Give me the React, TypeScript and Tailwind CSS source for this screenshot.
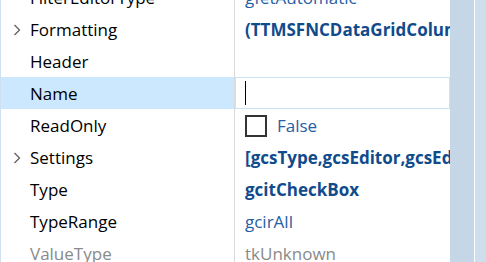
import React from "react";

type Row = {
  name: string;
  value?: string;
  expand?: boolean;
  bold?: boolean;
  dim?: boolean;
  selected?: boolean;
  checkbox?: boolean;
};

const rows: Row[] = [
  { name: "FilterEditorType", value: "gfetAutomatic", dim: false },
  { name: "Formatting", value: "(TTMSFNCDataGridColumnFormatting)", expand: true, bold: true },
  { name: "Header", value: "" },
  { name: "Name", selected: true },
  { name: "ReadOnly", value: "False", checkbox: true },
  { name: "Settings", value: "[gcsType,gcsEditor,gcsEditorItems]", expand: true, bold: true },
  { name: "Type", value: "gcitCheckBox", bold: true },
  { name: "TypeRange", value: "gcirAll" },
  { name: "ValueType", value: "tkUnknown", dim: true },
];

function Chevron() {
  return (
    <svg width="8" height="12" viewBox="0 0 8 12" className="shrink-0">
      <path d="M1.5 1 L6.5 6 L1.5 11" fill="none" stroke="#5f5f5f" strokeWidth="1.3" />
    </svg>
  );
}

export default function App() {
  return (
    <div
      className="w-[486px] h-[262px] overflow-hidden flex bg-white text-[17px]"
      style={{ fontFamily: '"Open Sans", "Noto Sans", sans-serif' }}
    >
      <div className="w-[450px] h-full flex border-l border-[#cfe0f0] overflow-hidden">
        <div className="flex flex-col mt-[-19px] w-full">
          {rows.map((r) => (
            <div key={r.name} className="flex h-[32px] shrink-0">
              <div
                className={
                  "w-[233px] shrink-0 flex items-center pt-[1px] " +
                  (r.selected ? "bg-[#cce8ff]" : "")
                }
              >
                <div className="w-[29px] pl-[12px] flex items-center">
                  {r.expand ? <Chevron /> : null}
                </div>
                <span className={r.dim ? "text-[#8a8a8a]" : "text-[#000000]"}>{r.name}</span>
              </div>
              <div className="w-px bg-[#dadada] shrink-0" />
              {r.selected ? (
                <div className="flex-1 border border-[#c9e2f6] flex items-center pl-[9px] min-w-0">
                  <div className="w-px h-[24px] bg-black" />
                </div>
              ) : (
                <div className="flex-1 flex items-center pt-[1px] pl-[10px] min-w-0 overflow-hidden whitespace-nowrap">
                  {r.checkbox ? (
                    <>
                      <div className="w-[22px] h-[22px] border-[2.5px] border-[#333333] mr-[10px] shrink-0" />
                      <span className="text-[#2660a4]">{r.value}</span>
                    </>
                  ) : (
                    <span
                      className={
                        r.bold
                          ? "font-bold text-[#104b8c]"
                          : r.dim
                          ? "text-[#8a8a8a]"
                          : "text-[#2660a4]"
                      }
                    >
                      {r.value}
                    </span>
                  )}
                </div>
              )}
            </div>
          ))}
        </div>
      </div>
      <div className="w-[24px] h-full bg-[#c5d7e7]" />
      <div className="w-px h-full bg-white" />
      <div className="flex-1 h-full bg-[#cfdeec]" />
    </div>
  );
}
